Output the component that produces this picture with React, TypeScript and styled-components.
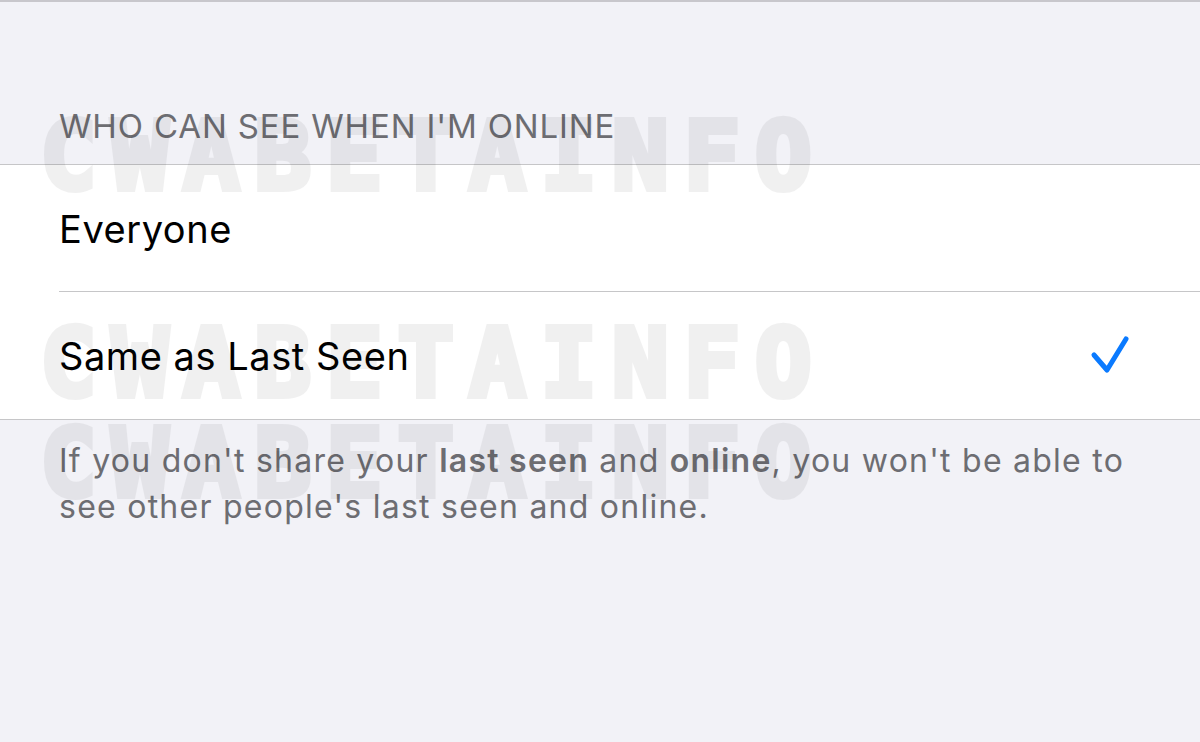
import styled, { createGlobalStyle } from "styled-components";

const GlobalStyle = createGlobalStyle`
  html, body {
    margin: 0;
    padding: 0;
    background: #f2f2f7;
  }

  body {
    font-family: Inter, "Noto Sans", sans-serif;
    -webkit-font-smoothing: antialiased;
  }
`;

type Option = {
  label: string;
  selected?: boolean;
};

const options: Option[] = [
  { label: "Everyone" },
  { label: "Same as Last Seen", selected: true },
];

// y offsets of the stamped watermark lines
const stamps = [118, 325, 425];

function Checkmark() {
  return (
    <svg width="44" height="44" viewBox="0 0 44 44" fill="none">
      <polyline
        points="6,21 19,36 38,5"
        stroke="#0a7aff"
        strokeWidth="5"
        strokeLinecap="round"
        strokeLinejoin="round"
      />
    </svg>
  );
}

export default function App() {
  return (
    <>
      <GlobalStyle />
      <Screen>
        <SectionTitle>Who can see when I'm online</SectionTitle>
        <Group>
          {options.map((option, i) => (
            <Row key={option.label} $last={i === options.length - 1}>
              <RowLabel>{option.label}</RowLabel>
              {option.selected && (
                <Accessory>
                  <Checkmark />
                </Accessory>
              )}
            </Row>
          ))}
        </Group>
        <Footnote>
          If you don't share your <b>last seen</b> and <b>online</b>, you won't
          be able to see other people's last seen and online.
        </Footnote>
        {stamps.map((top) => (
          <Watermark key={top} style={{ top }} aria-hidden="true">
            CWABETAINFO
          </Watermark>
        ))}
      </Screen>
    </>
  );
}

const Screen = styled.div`
  position: relative;
  height: 742px;
  overflow: hidden;
  border-top: 2px solid #c8c7cc;
  box-sizing: border-box;
`;

const SectionTitle = styled.h2`
  margin: 0;
  padding: 104px 59px 18px;
  font-size: 33px;
  font-weight: 400;
  line-height: 40px;
  letter-spacing: 0.85px;
  text-transform: uppercase;
  color: #6d6d72;
`;

const Group = styled.div`
  background: #ffffff;
  border-top: 1px solid #c6c6c8;
  border-bottom: 1px solid #c6c6c8;
`;

const Row = styled.div<{ $last?: boolean }>`
  position: relative;
  display: flex;
  align-items: center;
  height: 127px;
  padding: 0 68px 0 59px;

  &::after {
    content: "";
    position: absolute;
    left: 59px;
    right: 0;
    bottom: 0;
    height: 1px;
    background: #c6c6c8;
    display: ${(p) => (p.$last ? "none" : "block")};
  }
`;

const RowLabel = styled.span`
  flex: 1;
  font-size: 38px;
  letter-spacing: 0.55px;
  color: #000000;
`;

const Accessory = styled.span`
  display: flex;
  align-items: center;
`;

const Footnote = styled.p`
  margin: 0;
  padding: 18px 72px 0 59px;
  font-size: 32px;
  line-height: 46px;
  letter-spacing: 1.25px;
  color: #6d6d72;

  b {
    font-weight: 600;
  }
`;

const Watermark = styled.div`
  position: absolute;
  left: 40px;
  font-family: "DejaVu Sans Mono", monospace;
  font-weight: 700;
  font-size: 94px;
  line-height: 74px;
  letter-spacing: 14.9px;
  color: #000000;
  -webkit-text-stroke: 6px #000000;
  opacity: 0.055;
  pointer-events: none;
  white-space: nowrap;
`;
